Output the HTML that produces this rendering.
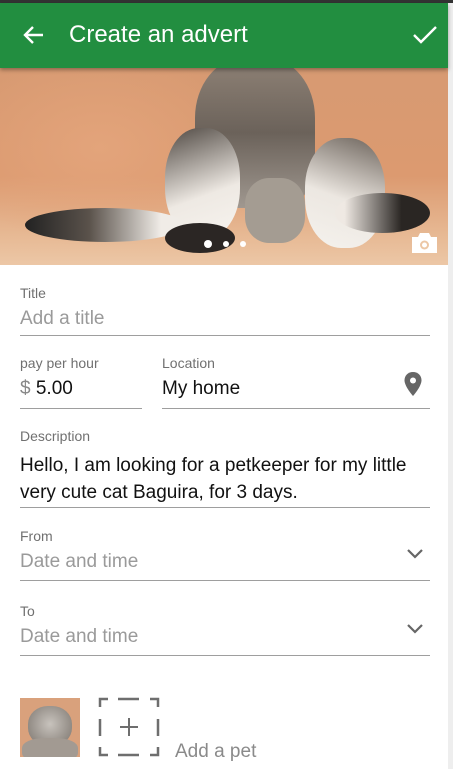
<!DOCTYPE html>
<html><head><meta charset="utf-8"><style>
*{margin:0;padding:0;box-sizing:border-box}
body{width:453px;height:769px;overflow:hidden;background:#fff;font-family:"Liberation Sans",sans-serif;position:relative}
.a{position:absolute}
.lbl{font-size:14px;color:#707070}
.ph{font-size:19px;color:#9a9a9a}
.val{font-size:19px;color:#111}
.line{height:1px;background:#9e9e9e}
</style></head><body>
<div class="a" style="left:0;top:0;width:453px;height:3px;background:#333"></div>
<div class="a" style="left:448px;top:3px;width:5px;height:766px;background:#eee"></div>
<div class="a" style="left:0;top:68px;width:448px;height:197px;overflow:hidden;background:linear-gradient(180deg,#d79a72 0%,#dc9a70 55%,#e7b994 85%,#ecc7a6 100%)">
<div class="a" style="left:-50px;top:-20px;width:300px;height:200px;background:radial-gradient(ellipse at center,#e3a47b 0%,rgba(0,0,0,0) 70%)"></div>
<div class="a" style="left:195px;top:-10px;width:120px;height:150px;border-radius:40% 40% 30% 30%;background:linear-gradient(180deg,#8f8276,#6b625a 50%,#a09890)"></div>
<div class="a" style="left:165px;top:60px;width:75px;height:110px;border-radius:45%;background:linear-gradient(160deg,#4f4842,#eee9e3 60%,#f7f4ef)"></div>
<div class="a" style="left:305px;top:70px;width:80px;height:110px;border-radius:45%;background:linear-gradient(200deg,#6b625a,#ece7e1 55%,#f5f2ed)"></div>
<div class="a" style="left:245px;top:110px;width:60px;height:65px;border-radius:40%;background:#a49c92"></div>
<div class="a" style="left:25px;top:140px;width:160px;height:34px;border-radius:50%;background:linear-gradient(90deg,#222 0%,#5a524b 40%,#f0ece7 85%)"></div>
<div class="a" style="left:335px;top:125px;width:95px;height:40px;border-radius:50%;background:linear-gradient(90deg,#efe9e3 10%,#2a2623 70%)"></div>
<div class="a" style="left:165px;top:155px;width:70px;height:30px;border-radius:50%;background:#2b2624"></div>
<div class="a" style="left:204px;top:172px;width:8px;height:8px;border-radius:50%;background:#fff"></div>
<div class="a" style="left:223px;top:173px;width:6px;height:6px;border-radius:50%;background:#fff"></div>
<div class="a" style="left:240px;top:173px;width:6px;height:6px;border-radius:50%;background:#fff"></div>
<svg class="a" style="left:411px;top:164px" width="27" height="22" viewBox="0 0 27 22"><path d="M1 5h6l2-4h9l2 4h6v16H1z" fill="#fff"/><circle cx="13.5" cy="13" r="4.5" fill="#ecc7a6"/><circle cx="13.5" cy="13" r="2.5" fill="#fff"/></svg>
</div>
<div class="a" style="left:0;top:3px;width:448px;height:65px;background:#228e40;box-shadow:0 2px 4px rgba(0,0,0,.35)">
<svg class="a" style="left:22px;top:20px" width="24" height="24" viewBox="0 0 24 24"><path d="M21 12H4M11 4l-8 8 8 8" stroke="#fff" stroke-width="2.4" fill="none"/></svg>
<div class="a" style="left:69px;top:18px;font-size:24px;color:#fff">Create an advert</div>
<svg class="a" style="left:412px;top:20px" width="26" height="24" viewBox="0 0 26 24"><path d="M2 12l7 7L24 4" stroke="#fff" stroke-width="2.4" fill="none"/></svg>
</div>
<div class="a lbl" style="left:20px;top:285px">Title</div>
<div class="a ph" style="left:20px;top:308px">Add a title</div>
<div class="a line" style="left:20px;top:335px;width:410px"></div>
<div class="a lbl" style="left:20px;top:355px">pay per hour</div>
<div class="a val" style="left:20px;top:378px"><span style="color:#888">$</span> 5.00</div>
<div class="a line" style="left:20px;top:408px;width:122px"></div>
<div class="a lbl" style="left:162px;top:355px">Location</div>
<div class="a val" style="left:162px;top:378px">My home</div>
<svg class="a" style="left:403px;top:371px" width="20" height="26" viewBox="0 0 20 26"><path d="M10 1C5 1 1.5 4.6 1.5 9.3 1.5 15.5 10 25 10 25s8.5-9.5 8.5-15.7C18.5 4.6 15 1 10 1z" fill="#666"/><circle cx="10" cy="9.5" r="3" fill="#fff"/></svg>
<div class="a line" style="left:162px;top:408px;width:268px"></div>
<div class="a lbl" style="left:20px;top:428px">Description</div>
<div class="a val" style="left:20px;top:452px;line-height:27px;width:415px">Hello, I am looking for a petkeeper for my little very cute cat Baguira, for 3 days.</div>
<div class="a line" style="left:20px;top:507px;width:410px"></div>
<div class="a lbl" style="left:20px;top:528px">From</div>
<div class="a ph" style="left:20px;top:551px">Date and time</div>
<svg class="a" style="left:406px;top:548px" width="18" height="12" viewBox="0 0 18 12"><path d="M2 2l7 7 7-7" stroke="#666" stroke-width="2.2" fill="none"/></svg>
<div class="a line" style="left:20px;top:580px;width:410px"></div>
<div class="a lbl" style="left:20px;top:603px">To</div>
<div class="a ph" style="left:20px;top:626px">Date and time</div>
<svg class="a" style="left:406px;top:623px" width="18" height="12" viewBox="0 0 18 12"><path d="M2 2l7 7 7-7" stroke="#666" stroke-width="2.2" fill="none"/></svg>
<div class="a line" style="left:20px;top:655px;width:410px"></div>
<div class="a" style="left:20px;top:698px;width:60px;height:59px;background:#d9a17c;overflow:hidden">
<div class="a" style="left:8px;top:8px;width:44px;height:40px;border-radius:45%;background:radial-gradient(circle at 50% 45%,#c8c3bd,#7a736c)"></div>
<div class="a" style="left:2px;top:40px;width:56px;height:25px;border-radius:40%;background:#a29a92"></div>
</div>
<svg class="a" style="left:98px;top:697px" width="62" height="60" viewBox="0 0 62 60" fill="none" stroke="#6e6e6e" stroke-width="2.5"><path d="M2 10V2h8M20 2h21M52 2h8v8M2 22v17M60 22v17M2 50v8h8M20 58h21M52 58h8v-8"/><path d="M31 21v18M22 30h18" stroke-width="2"/></svg>
<div class="a ph" style="left:175px;top:741px;color:#8a8a8a">Add a pet</div>
</body></html>
